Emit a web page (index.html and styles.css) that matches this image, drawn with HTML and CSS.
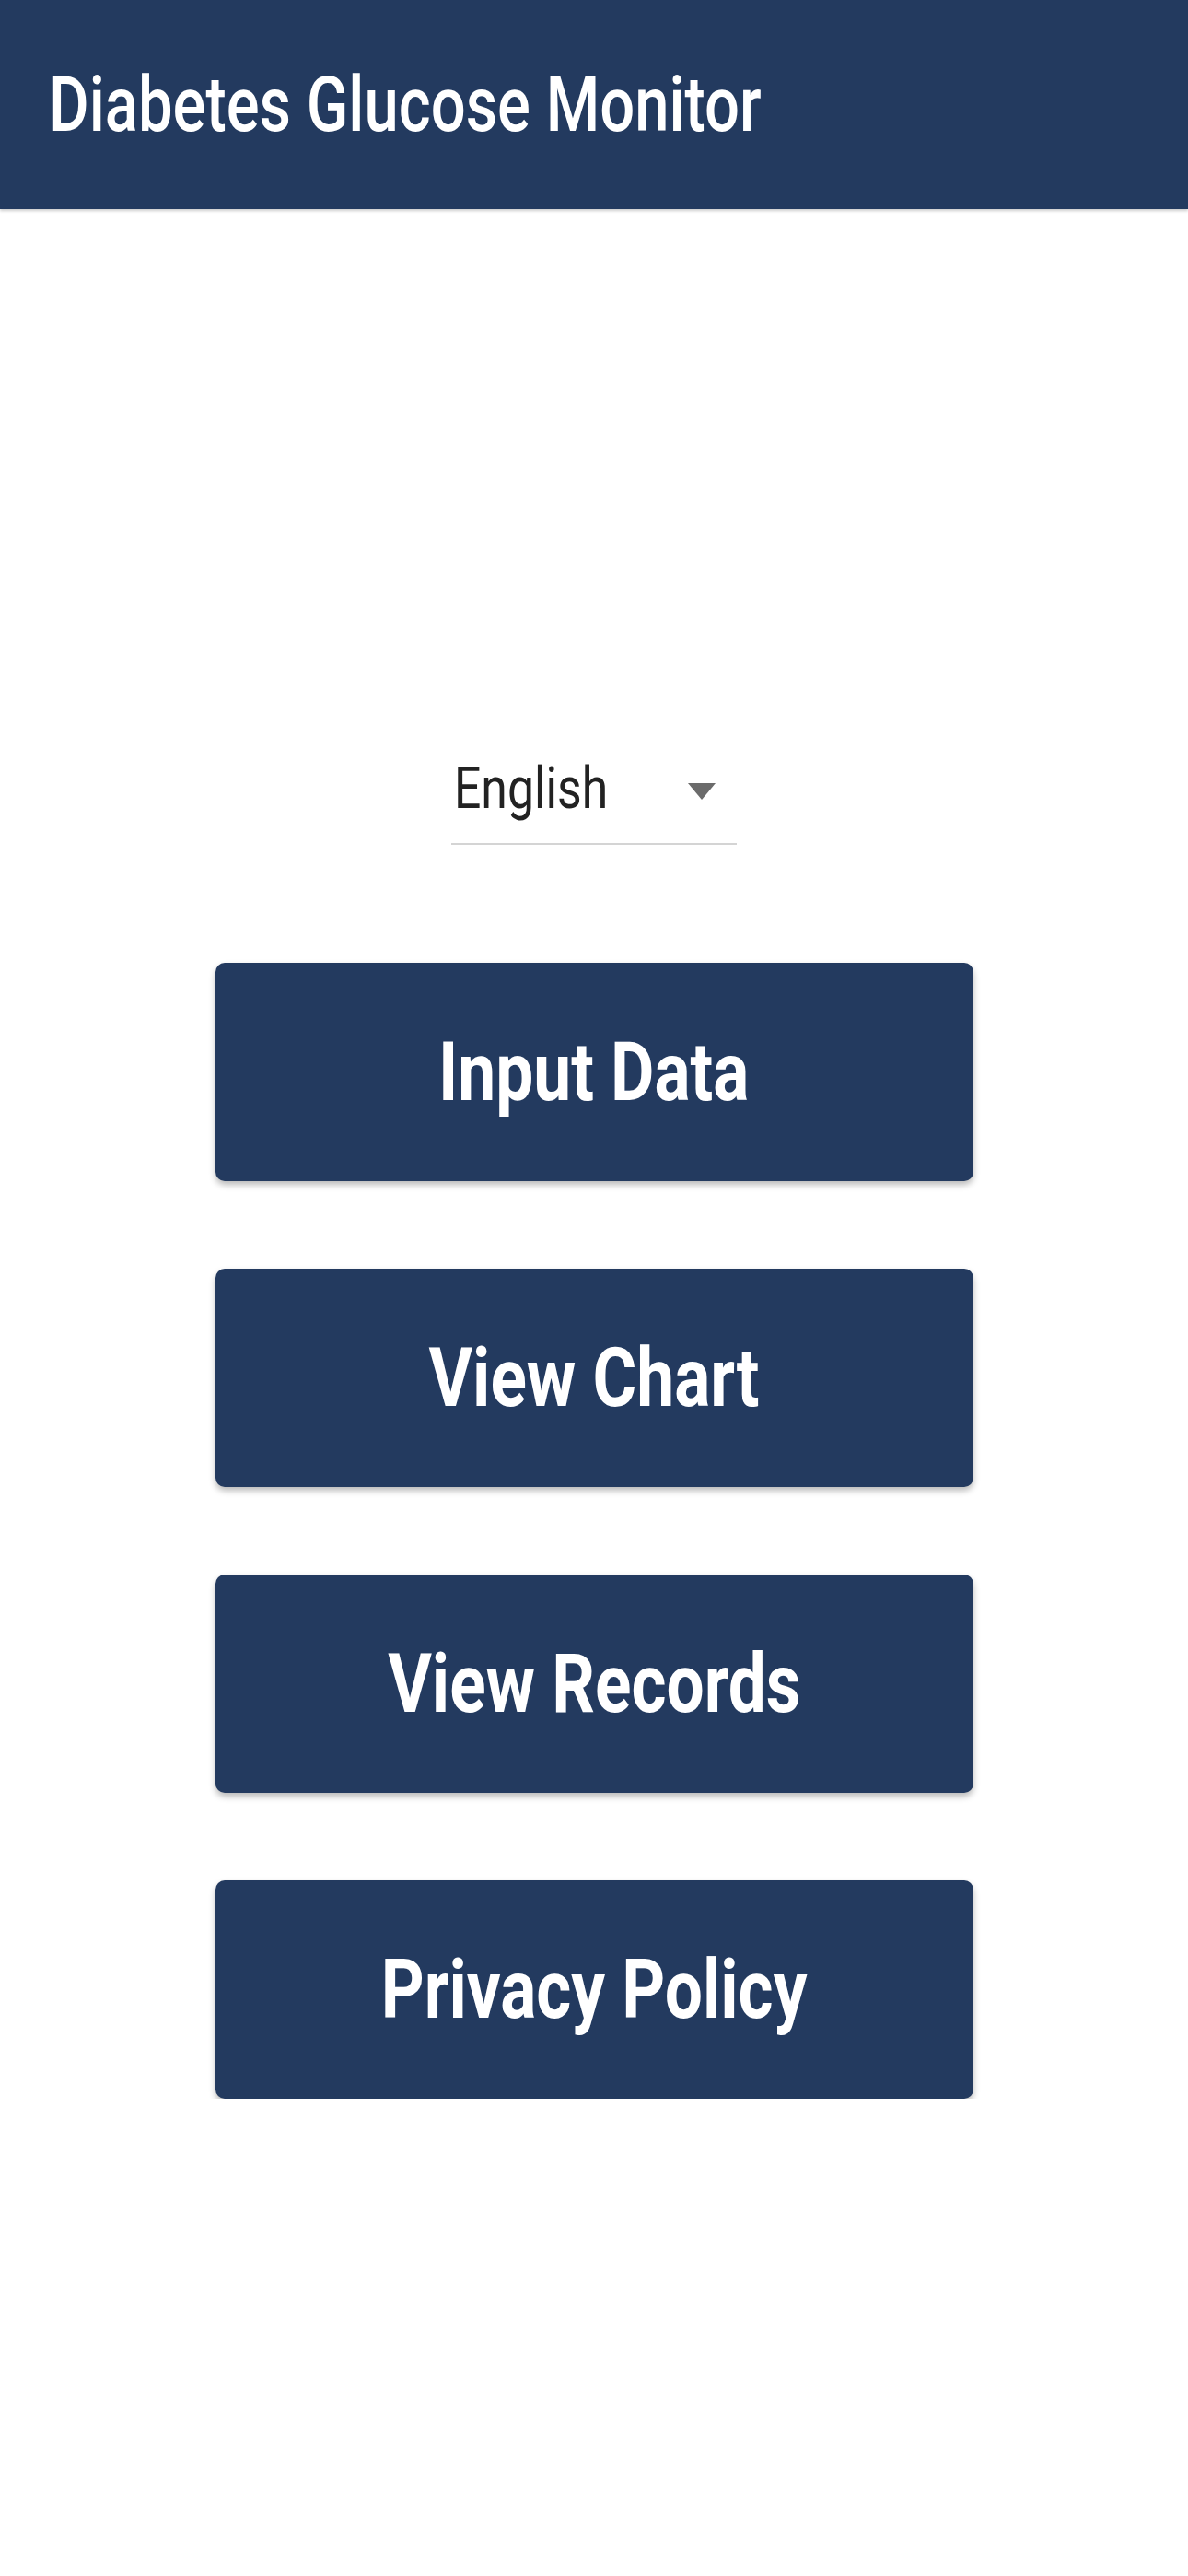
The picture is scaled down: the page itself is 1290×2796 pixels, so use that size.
FILE: index.html
```html
<!DOCTYPE html>
<html>
<head>
<meta charset="utf-8">
<link rel="stylesheet" href="styles.css">
</head>
<body>
<header class="appbar">
  <span class="appbar-title">Diabetes Glucose Monitor</span>
</header>
<main class="content">
  <div class="select">
    <span class="select-value">English</span>
    <svg class="select-arrow" width="30" height="18" viewBox="0 0 30 18"><path d="M0 0 L30 0 L15 18 Z" fill="#6b6b6b"/></svg>
  </div>
  <div class="buttons">
    <button class="btn"><span class="btn-label">Input Data</span></button>
    <button class="btn"><span class="btn-label">View Chart</span></button>
    <button class="btn"><span class="btn-label">View Records</span></button>
    <button class="btn"><span class="btn-label">Privacy Policy</span></button>
  </div>
</main>
</body>
</html>
```

FILE: styles.css
```css
html, body {
  margin: 0;
  padding: 0;
  background: #ffffff;
  font-family: Roboto, "Noto Sans", sans-serif;
}

.appbar {
  height: 227px;
  background: #233a5f;
  box-shadow: 0 2px 3px rgba(0, 0, 0, 0.2);
  display: flex;
  align-items: center;
  padding-left: 53px;
  box-sizing: border-box;
}

.appbar-title {
  display: inline-block;
  color: #ffffff;
  font-weight: 500;
  font-size: 83px;
  line-height: 1;
  transform: scaleX(0.807);
  transform-origin: left center;
  white-space: nowrap;
}

.content {
  display: flex;
  flex-direction: column;
  align-items: center;
  padding-top: 580px;
}

.select {
  width: 310px;
  height: 110px;
  box-sizing: border-box;
  border-bottom: 2px solid #d4d4d4;
  display: flex;
  align-items: center;
  justify-content: space-between;
  padding: 0 23px 0 3px;
}

.select-value {
  display: inline-block;
  color: #222222;
  font-size: 63px;
  font-weight: 400;
  line-height: 1;
  transform: scaleX(0.82);
  transform-origin: left center;
  margin-top: -12px;
}

.select-arrow {
  display: block;
  margin-top: -4px;
}

.buttons {
  margin-top: 128px;
  display: flex;
  flex-direction: column;
  gap: 95px;
}

.btn {
  width: 823px;
  height: 237px;
  border: none;
  border-radius: 10px;
  background: #233a5f;
  box-shadow: 0 4px 7px rgba(0, 0, 0, 0.28);
  display: flex;
  align-items: center;
  justify-content: center;
  padding: 0;
  margin: 0;
  font-family: inherit;
}

.btn-label {
  display: inline-block;
  color: #ffffff;
  font-size: 89px;
  font-weight: 700;
  line-height: 1;
  transform: scaleX(0.82);
  white-space: nowrap;
}
```
